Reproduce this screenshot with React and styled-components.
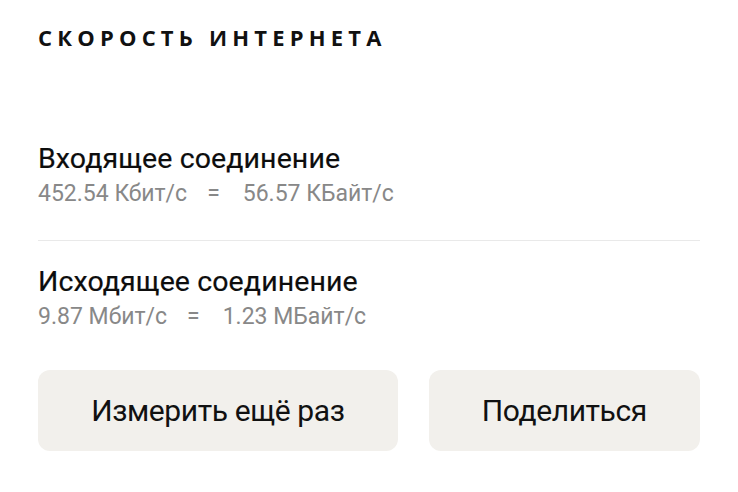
import React from 'react';
import styled, { createGlobalStyle } from 'styled-components';

const GlobalStyle = createGlobalStyle`
	html, body {
		margin: 0;
		padding: 0;
		background: #ffffff;
	}
	body {
		font-family: Roboto, "Noto Sans", sans-serif;
		-webkit-font-smoothing: antialiased;
	}
`;

const Panel = styled.div`
	width: 738px;
	height: 492px;
	box-sizing: border-box;
	padding: 25px 38px 0 38px;
	display: flex;
	flex-direction: column;
`;

const Title = styled.div`
	font-family: "Open Sans", "Noto Sans", sans-serif;
	font-weight: 700;
	font-size: 22px;
	line-height: 24px;
	letter-spacing: 5.2px;
	color: #111111;
	margin-bottom: 93px;
`;

const Connection = styled.div`
	display: flex;
	flex-direction: column;
	padding-bottom: ${(p) => (p.last ? '0' : '32px')};
	border-bottom: ${(p) => (p.last ? 'none' : '1px solid #e9e9e9')};
	margin-bottom: ${(p) => (p.last ? '39px' : '24px')};
`;

const ConnectionName = styled.div`
	font-size: 28.5px;
	line-height: 34px;
	color: #0d0d0d;
	letter-spacing: 0.1px;
	-webkit-text-stroke: 0.2px #0d0d0d;
`;

const ConnectionSpeed = styled.div`
	font-size: 23px;
	line-height: 28px;
	color: #888888;
	margin-top: 4px;
	display: flex;

	& .speed-equals {
		margin: 0 23px 0 20px;
	}
`;

const Actions = styled.div`
	display: flex;
	gap: 31px;
`;

const ActionButton = styled.button`
	flex: 1 1 auto;
	height: 81px;
	border: none;
	border-radius: 12px;
	background: #f2f0ec;
	font-family: Roboto, "Noto Sans", sans-serif;
	font-size: 30px;
	color: #111111;
	padding: 0;
	letter-spacing: -0.4px;
	cursor: pointer;
`;

const connections = [
	{ name: 'Входящее соединение', bits: '452.54 Кбит/с', bytes: '56.57 КБайт/с' },
	{ name: 'Исходящее соединение', bits: '9.87 Мбит/с', bytes: '1.23 МБайт/с' },
];

export default function App() {
	return (
		<>
			<GlobalStyle />
			<Panel>
				<Title>СКОРОСТЬ ИНТЕРНЕТА</Title>
				{connections.map((c, index) => (
					<Connection key={c.name} last={index === connections.length - 1}>
						<ConnectionName>{c.name}</ConnectionName>
						<ConnectionSpeed>
							<span>{c.bits}</span>
							<span className="speed-equals">=</span>
							<span>{c.bytes}</span>
						</ConnectionSpeed>
					</Connection>
				))}
				<Actions>
					<ActionButton>Измерить ещё раз</ActionButton>
					<ActionButton>Поделиться</ActionButton>
				</Actions>
			</Panel>
		</>
	);
}
